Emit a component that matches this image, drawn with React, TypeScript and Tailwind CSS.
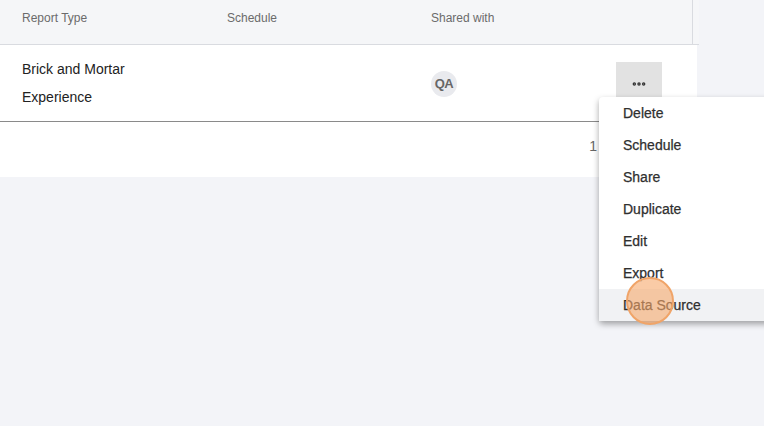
import { MoreHorizontal } from "lucide-react";

const columns = [
  { label: "Report Type", width: "w-[205px]" },
  { label: "Schedule", width: "w-[204px]" },
  { label: "Shared with", width: "w-[180px]" },
];

const actions = [
  "Delete",
  "Schedule",
  "Share",
  "Duplicate",
  "Edit",
  "Export",
  "Data Source",
];

function ActionMenu() {
  return (
    <div className="absolute left-[599px] top-[97px] w-[180px] rounded-sm bg-white shadow-[0_3px_6px_rgba(0,0,0,0.35)]">
      {actions.map((action, i) => (
        <div
          key={action}
          className={`flex h-[32px] items-center pl-[24px] text-[14px] text-[#2f2f2f] [-webkit-text-stroke:0.25px_#2f2f2f] ${
            i === actions.length - 1 ? "bg-[#f1f2f4]" : ""
          }`}
        >
          {action}
        </div>
      ))}
    </div>
  );
}

export default function App() {
  return (
    <div
      className="relative h-[426px] w-[764px] overflow-hidden bg-[#f3f4f8]"
      style={{ fontFamily: '"Liberation Sans", Arial, sans-serif' }}
    >
      <div className="w-[697px]">
        {/* Header */}
        <div className="flex h-[45px] w-[699px] border-b border-[#d9dbe0] bg-[#f5f6f8]">
          <div className="flex w-[693px] border-r border-[#d9dbe0] pl-[22px] pt-[9px]">
            {columns.map((col) => (
              <div key={col.label} className={`${col.width} text-[12px] text-[#6b6b6b]`}>
                {col.label}
              </div>
            ))}
          </div>
        </div>

        {/* Row */}
        <div className="flex h-[77px] items-center border-b border-[#8a8a8a] bg-white pl-[22px]">
          <div className="w-[205px] text-[14px] leading-[28px] text-[#222]">
            Brick and Mortar
            <br />
            Experience
          </div>
          <div className="w-[204px]" />
          <div className="w-[185px] pt-[2px]">
            <div className="flex h-[26px] w-[26px] items-center justify-center rounded-full bg-[#e9eaee] text-[13px] font-bold tracking-[-0.5px] text-[#666]">
              QA
            </div>
          </div>
          <div className="flex h-[42px] w-[46px] items-center justify-center bg-[#e2e2e2] pt-[2px]">
            <MoreHorizontal size={16} strokeWidth={3.2} className="text-[#333]" />
          </div>
        </div>

        {/* Pager */}
        <div className="flex h-[55px] justify-end bg-white pr-[100px] pt-[14px] text-[14px] text-[#666]">
          1
        </div>
      </div>

      <ActionMenu />

      {/* Click marker */}
      <div className="pointer-events-none absolute left-[626px] top-[277px] h-[48px] w-[48px] rounded-full border-2 border-[#f0a468] bg-[#f7a86a]/60" />
    </div>
  );
}
